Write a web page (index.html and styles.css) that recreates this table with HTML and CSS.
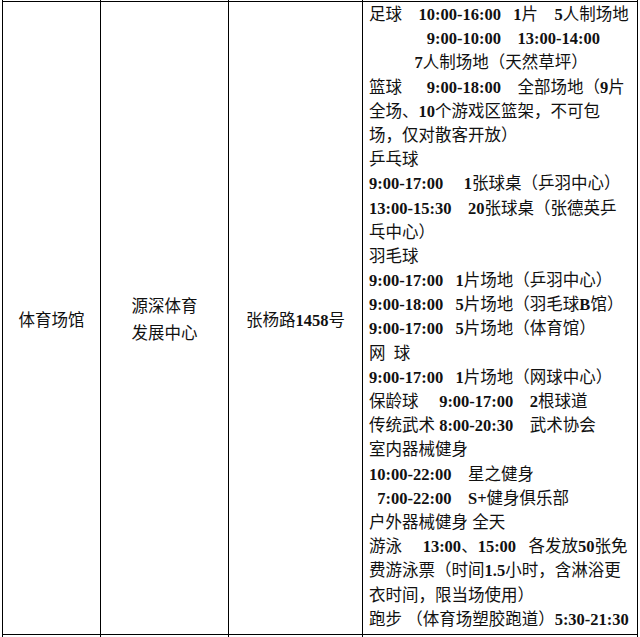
FILE: index.html
```html
<!DOCTYPE html>
<html lang="zh-CN">
<head>
<meta charset="utf-8">
<title>体育场馆开放时间</title>
<link rel="stylesheet" href="styles.css">
</head>
<body>
<table class="sched">
<colgroup><col class="c1"><col class="c2"><col class="c3"><col class="c4"></colgroup>
<tbody>
<tr class="stub stub-top"><td></td><td></td><td></td><td></td></tr>
<tr class="main">
<td class="cat">体育场馆</td>
<td class="org">源深体育<br>发展中心</td>
<td class="addr">张杨路<b>1458</b>号</td>
<td class="items">
<div class="l">足球    <b>10:00-16:00</b>   <b>1</b>片    <b>5</b>人制场地</div>
<div class="l">              <b>9:00-10:00</b>    <b>13:00-14:00</b></div>
<div class="l">           <b>7</b>人制场地（天然草坪）</div>
<div class="l">篮球      <b>9:00-18:00</b>    全部场地（<b>9</b>片</div>
<div class="l">全场、<b>10</b>个游戏区篮架，不可包</div>
<div class="l">场，仅对散客开放）</div>
<div class="l">乒乓球</div>
<div class="l"><b>9:00-17:00</b>     <b>1</b>张球桌（乒羽中心）</div>
<div class="l"><b>13:00-15:30</b>    <b>20</b>张球桌（张德英乒</div>
<div class="l">乓中心）</div>
<div class="l">羽毛球</div>
<div class="l"><b>9:00-17:00</b>   <b>1</b>片场地（乒羽中心）</div>
<div class="l"><b>9:00-18:00</b>   <b>5</b>片场地（羽毛球<b>B</b>馆）</div>
<div class="l"><b>9:00-17:00</b>   <b>5</b>片场地（体育馆）</div>
<div class="l">网  球</div>
<div class="l"><b>9:00-17:00</b>   <b>1</b>片场地（网球中心）</div>
<div class="l">保龄球     <b>9:00-17:00</b>    <b>2</b>根球道</div>
<div class="l">传统武术 <b>8:00-20:30</b>    武术协会</div>
<div class="l">室内器械健身</div>
<div class="l"><b>10:00-22:00</b>    星之健身</div>
<div class="l">  <b>7:00-22:00</b>    <b>S+</b>健身俱乐部</div>
<div class="l">户外器械健身 全天</div>
<div class="l">游泳     <b>13:00</b>、<b>15:00</b>   各发放<b>50</b>张免</div>
<div class="l">费游泳票（时间<b>1.5</b>小时，含淋浴更</div>
<div class="l">衣时间，限当场使用）</div>
<div class="l">跑步 （体育场塑胶跑道）<b>5:30-21:30</b></div>
</td>
</tr>
<tr class="stub stub-bottom"><td></td><td></td><td></td><td></td></tr>
</tbody>
</table>
</body>
</html>
```
FILE: styles.css
```css
html, body {
  margin: 0;
  padding: 0;
  background: #fff;
}

body {
  padding-left: 2px;
  font-family: "Liberation Serif", "Noto Sans CJK SC", serif;
  font-size: 16.5px;
  color: #111;
  overflow: hidden;
}

.sched {
  border-collapse: collapse;
  table-layout: fixed;
  width: 635px;
}

.c1 { width: 98px; }
.c2 { width: 128px; }
.c3 { width: 134px; }
.c4 { width: 275px; }

.sched td {
  border-left: 1px solid #000;
  border-right: 1px solid #000;
  padding: 0;
}

.stub-top td {
  height: 1px;
}

.stub-bottom td {
  height: 20px;
}

.main td {
  border-top: 1px solid #000;
  border-bottom: 1px solid #000;
}

.sched b {
  font-weight: bold;
}

.sched .cat,
.sched .org,
.sched .addr {
  text-align: center;
  vertical-align: middle;
  line-height: 24.2px;
  padding-top: 6px;
}

.sched .org {
  line-height: 26.7px;
}

.sched .items {
  vertical-align: top;
  text-align: left;
  padding: 1px 0 2px 6px;
}

.l {
  white-space: pre;
  line-height: 24.2px;
  height: 24.2px;
}
```
